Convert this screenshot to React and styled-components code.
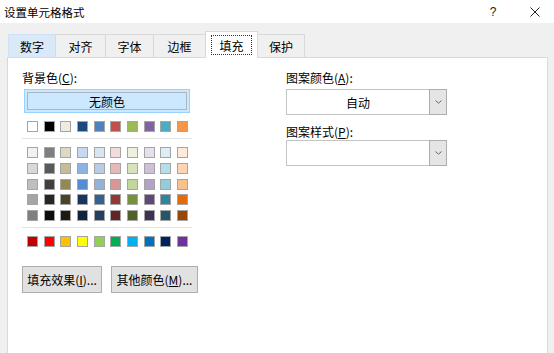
import React from 'react';
import styled, { createGlobalStyle } from 'styled-components';

const GlobalStyle = createGlobalStyle`
    html, body {
        margin: 0;
        padding: 0;
        background: #f0f0f0;
    }
    body {
        font-family: "Noto Sans CJK SC", "Microsoft YaHei", sans-serif;
        font-size: 12px;
        color: #000;
    }
`;

const themeRow = ['#ffffff', '#000000', '#eeece1', '#1f497d', '#4f81bd', '#c0504d', '#9bbb59', '#8064a2', '#4bacc6', '#f79646'];

const shadeRows = [
    ['#f2f2f2', '#7f7f7f', '#ddd9c3', '#c6d9f0', '#dbe5f1', '#f2dcdb', '#ebf1dd', '#e5e0ec', '#dbeef3', '#fdeada'],
    ['#d8d8d8', '#595959', '#c4bd97', '#8db3e2', '#b8cce4', '#e5b9b7', '#d7e3bc', '#ccc1d9', '#b7dde8', '#fbd5b5'],
    ['#bfbfbf', '#3f3f3f', '#938953', '#548dd4', '#95b3d7', '#d99694', '#c3d69b', '#b2a2c7', '#92cddc', '#fac08f'],
    ['#a5a5a5', '#262626', '#494429', '#17365d', '#366092', '#953734', '#76923c', '#5f497a', '#31859b', '#e36c09'],
    ['#7f7f7f', '#0c0c0c', '#1d1b10', '#0f243e', '#244061', '#632423', '#4f6128', '#3f3151', '#205867', '#974806'],
];

const standardRow = ['#c00000', '#ff0000', '#ffc000', '#ffff00', '#92d050', '#00b050', '#00b0f0', '#0070c0', '#002060', '#7030a0'];

// tab widths follow the measured reference strip
const tabs = [
    { label: '数字', width: 48 },
    { label: '对齐', width: 51 },
    { label: '字体', width: 49 },
    { label: '边框', width: 53 },
    { label: '填充', width: 53 },
    { label: '保护', width: 48 },
];

const Window = styled.div`
    width: 554px;
    height: 353px;
    overflow: hidden;
    display: flex;
    flex-direction: column;
    background: #f0f0f0;
`;

const TitleBar = styled.div`
    height: 23px;
    flex: none;
    display: flex;
    align-items: center;
    justify-content: space-between;
    padding-left: 4px;
    background: #ffffff;
`;

const Title = styled.span`
    font-size: 11.5px;
    line-height: 16px;
`;

const Controls = styled.div`
    display: flex;
    align-items: center;
    height: 100%;
`;

const HelpButton = styled.span`
    width: 46px;
    text-align: center;
    font-family: "Liberation Sans", sans-serif;
    font-size: 12px;
    color: #222;
`;

const CloseButton = styled.span`
    width: 38px;
    display: flex;
    justify-content: center;
`;

const Body = styled.div`
    flex: 1;
    display: flex;
    flex-direction: column;
    padding: 8px 6px 0 7px;
`;

const TabStrip = styled.div`
    display: flex;
    align-items: flex-end;
    height: 26px;
    padding-left: 1px;
    position: relative;
    z-index: 1;
`;

const Tab = styled.div`
    box-sizing: border-box;
    width: ${p => p.width}px;
    height: ${p => (p.active ? '27px' : '23px')};
    margin: 0 0 ${p => (p.active ? '-1px' : '0')} ${p => (p.first ? '0' : '-1px')};
    display: flex;
    align-items: center;
    justify-content: center;
    border: 1px solid ${p => (p.hover ? '#cfe2f5' : '#d9d9d9')};
    border-bottom: none;
    background: ${p => (p.active ? '#ffffff' : p.hover ? '#d9e9f8' : '#f0f0f0')};
    position: relative;
    z-index: ${p => (p.active ? 2 : 0)};
`;

const TabLabel = styled.span`
    line-height: 16px;
    padding: 2px 7px 0;
    outline: ${p => (p.focused ? '1px dotted #333' : 'none')};
`;

const Panel = styled.div`
    flex: 1;
    display: flex;
    background: #ffffff;
    border: 1px solid #d9d9d9;
    border-bottom: none;
    padding: 12px 0 0 14px;
`;

const LeftColumn = styled.div`
    width: 170px;
    display: flex;
    flex-direction: column;
`;

const RightColumn = styled.div`
    width: 161px;
    margin-left: 94px;
    display: flex;
    flex-direction: column;
`;

const Label = styled.div`
    line-height: 16px;
    height: 16px;
    margin-top: ${p => p.top || 0}px;
`;

const NoColorButton = styled.div`
    margin: 3px 2px 0;
    height: 24px;
    box-sizing: border-box;
    display: flex;
    align-items: center;
    justify-content: center;
    background: #cce8ff;
    border: 1px solid #99d1ff;
    box-shadow: inset 0 0 0 2px #cce8ff, inset 0 0 0 3px #a9b7c4;
`;

const SwatchGrid = styled.div`
    display: grid;
    grid-template-columns: repeat(10, 11px);
    justify-content: space-between;
    row-gap: 4.75px;
    padding: 0 4px 0 5px;
    margin-top: ${p => p.top}px;
`;

const Swatch = styled.div`
    width: 11px;
    height: 11px;
    box-sizing: border-box;
    border: 1px solid #a5a5a5;
    background: ${p => p.color};
`;

const Divider = styled.div`
    height: 1px;
    background: #e3e3e3;
    margin-top: 6px;
`;

const ButtonRow = styled.div`
    display: flex;
    gap: 9px;
    margin-top: 19px;
`;

const PushButton = styled.div`
    flex: none;
    width: ${p => p.width}px;
    height: 27px;
    box-sizing: border-box;
    display: flex;
    align-items: center;
    justify-content: center;
    background: #e1e1e1;
    border: 1px solid #adadad;
`;

const Combo = styled.div`
    height: 26px;
    margin-top: ${p => p.top || 0}px;
    box-sizing: border-box;
    display: flex;
    background: #ffffff;
    border: 1px solid #c4c4c4;
`;

const ComboText = styled.div`
    flex: 1;
    display: flex;
    align-items: center;
    justify-content: center;
`;

const ComboArrow = styled.div`
    width: 16px;
    margin: -1px -1px -1px 0;
    display: flex;
    align-items: center;
    justify-content: center;
    background: #e5e5e5;
    border: 1px solid #adadad;
`;

const Underline = styled.span`
    text-decoration: underline;
`;

const Chevron = () => (
    <svg width="7" height="4" viewBox="0 0 7 4">
        <path d="M0.5 0.5 L3.5 3.2 L6.5 0.5" fill="none" stroke="#666" strokeWidth="1" />
    </svg>
);

const CloseIcon = () => (
    <svg width="10" height="10" viewBox="0 0 10 10">
        <path d="M0.5 0.5 L9.5 9.5 M9.5 0.5 L0.5 9.5" stroke="#222" strokeWidth="1" />
    </svg>
);

const App = () => (
    <>
        <GlobalStyle />
        <Window>
            <TitleBar>
                <Title>设置单元格格式</Title>
                <Controls>
                    <HelpButton>?</HelpButton>
                    <CloseButton><CloseIcon /></CloseButton>
                </Controls>
            </TitleBar>
            <Body>
                <TabStrip>
                    {tabs.map((t, i) => (
                        <Tab
                            key={t.label}
                            width={t.width}
                            first={i === 0}
                            active={t.label === '填充'}
                            hover={i === 0}
                        >
                            <TabLabel focused={t.label === '填充'}>{t.label}</TabLabel>
                        </Tab>
                    ))}
                </TabStrip>
                <Panel>
                    <LeftColumn>
                        <Label>背景色(<Underline>C</Underline>):</Label>
                        <NoColorButton>无颜色</NoColorButton>
                        <SwatchGrid top={8}>
                            {themeRow.map((c, i) => <Swatch key={i} color={c} />)}
                        </SwatchGrid>
                        <Divider />
                        <SwatchGrid top={8}>
                            {shadeRows.flat().map((c, i) => <Swatch key={i} color={c} />)}
                        </SwatchGrid>
                        <Divider />
                        <SwatchGrid top={8}>
                            {standardRow.map((c, i) => <Swatch key={i} color={c} />)}
                        </SwatchGrid>
                        <ButtonRow>
                            <PushButton width={80}>填充效果(<Underline>I</Underline>)...</PushButton>
                            <PushButton width={87}>其他颜色(<Underline>M</Underline>)...</PushButton>
                        </ButtonRow>
                    </LeftColumn>
                    <RightColumn>
                        <Label>图案颜色(<Underline>A</Underline>):</Label>
                        <Combo top={3}>
                            <ComboText>自动</ComboText>
                            <ComboArrow><Chevron /></ComboArrow>
                        </Combo>
                        <Label top={9}>图案样式(<Underline>P</Underline>):</Label>
                        <Combo>
                            <ComboText />
                            <ComboArrow><Chevron /></ComboArrow>
                        </Combo>
                    </RightColumn>
                </Panel>
            </Body>
        </Window>
    </>
);

export default App;
